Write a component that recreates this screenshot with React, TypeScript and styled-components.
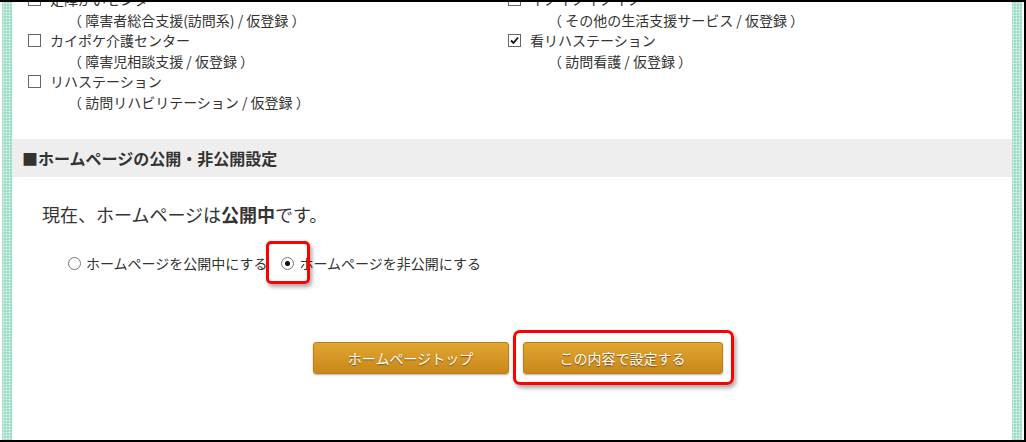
import React from "react";
import styled, { createGlobalStyle } from "styled-components";

const GlobalStyle = createGlobalStyle`
  html, body {
    margin: 0;
    padding: 0;
    background: #fff;
  }
  body {
    font-family: "Noto Sans CJK JP", "Noto Sans", sans-serif;
    color: #333;
  }
`;

const Frame = styled.div`
  position: relative;
  width: 1026px;
  height: 442px;
  box-sizing: border-box;
  border-top: 2px solid #000;
  border-right: 2px solid #000;
  border-bottom: 2px solid #000;
  display: flex;
  overflow: hidden;
  background: #fff;
`;

const Stripe = styled.div<{ $ml?: number; $mr?: number }>`
  flex: 0 0 10px;
  margin-left: ${(p) => p.$ml ?? 0}px;
  margin-right: ${(p) => p.$mr ?? 0}px;
  background-color: #9cdcc6;
  background-image: radial-gradient(
    circle,
    rgba(255, 255, 255, 0.6) 0.8px,
    transparent 1.3px
  );
  background-size: 3px 3px;
`;

const Content = styled.main`
  flex: 1;
  display: flex;
  flex-direction: column;
  min-width: 0;
`;

const OfficeList = styled.ul`
  list-style: none;
  margin: -13px 0 0;
  padding: 0 0 0 16px;
  display: grid;
  grid-template-columns: 480px 1fr;
  grid-auto-flow: column;
  grid-template-rows: repeat(3, auto);
  row-gap: 0;
`;

const Office = styled.li`
  font-size: 14px;
  line-height: 20.5px;
  color: #333;
`;

const NameLine = styled.div`
  display: flex;
  align-items: center;
`;

const Box = styled.span`
  flex: 0 0 auto;
  width: 11px;
  height: 11px;
  border: 1px solid #666;
  margin-right: 9px;
  display: inline-flex;
  align-items: center;
  justify-content: center;
  background: #fff;
`;

const SubLine = styled.div`
  padding-left: 40px;
  color: #333;
`;

const SectionHead = styled.h2`
  margin: 27px 0 0;
  height: 38px;
  display: flex;
  align-items: center;
  padding-left: 10px;
  background: #eeeeee;
  font-size: 16px;
  font-weight: 700;
  color: #333;
`;

const Status = styled.p`
  margin: 24px 0 0;
  padding-left: 30px;
  font-size: 18px;
  line-height: 27px;
  color: #333;
  b {
    font-weight: 700;
  }
`;

const RadioRow = styled.div`
  margin-top: 25px;
  padding-left: 56px;
  display: flex;
  align-items: center;
  font-size: 14px;
  line-height: 20px;
  color: #333;
`;

const RadioLabel = styled.label<{ $gapRight?: number }>`
  display: inline-flex;
  align-items: center;
  margin-right: ${(p) => p.$gapRight ?? 0}px;
`;

const RadioCircle = styled.span<{ $on?: boolean }>`
  position: relative;
  width: 11px;
  height: 11px;
  border: 1px solid #777;
  border-radius: 50%;
  margin-right: 5px;
  background: #fff;
  &::after {
    content: "";
    display: ${(p) => (p.$on ? "block" : "none")};
    position: absolute;
    left: 3px;
    top: 3px;
    width: 5px;
    height: 5px;
    border-radius: 50%;
    background: #111;
  }
`;

const Highlight = styled.span<{ $t: number; $r: number; $b: number; $l: number; $rad: number }>`
  position: relative;
  display: inline-flex;
  &::before {
    content: "";
    position: absolute;
    top: ${(p) => -p.$t}px;
    right: ${(p) => -p.$r}px;
    bottom: ${(p) => -p.$b}px;
    left: ${(p) => -p.$l}px;
    border: 3px solid #ff0000;
    border-radius: ${(p) => p.$rad}px;
    box-shadow: 2px 3px 4px rgba(0, 0, 0, 0.35);
    pointer-events: none;
  }
`;

const ButtonRow = styled.div`
  margin-top: 69px;
  display: flex;
  justify-content: center;
  gap: 14px;
  padding-left: 11px;
`;

const Button = styled.button<{ $w: number }>`
  width: ${(p) => p.$w}px;
  height: 32px;
  border: 1px solid #bb7f18;
  border-radius: 3px;
  background: linear-gradient(#e2a52f, #c8881b);
  box-shadow: 0 1px 2px rgba(0, 0, 0, 0.3);
  color: #fff;
  font-family: "Noto Sans CJK JP", "Noto Sans", sans-serif;
  font-size: 14px;
  text-shadow: 0 1px 1px rgba(0, 0, 0, 0.45);
  cursor: pointer;
  padding: 0;
`;

const CheckMark = () => (
  <svg width="11" height="11" viewBox="0 0 11 11">
    <path d="M2 5.5 L4.5 8 L9 2.5" fill="none" stroke="#111" strokeWidth="1.8" />
  </svg>
);

type Item = { name: string; sub: string; checked?: boolean };

const items: Item[] = [
  { name: "足障がいセンター", sub: "（ 障害者総合支援(訪問系) / 仮登録 ）" },
  { name: "カイポケ介護センター", sub: "（ 障害児相談支援 / 仮登録 ）" },
  { name: "リハステーション", sub: "（ 訪問リハビリテーション / 仮登録 ）" },
  { name: "イノイノイノイノ", sub: "（ その他の生活支援サービス / 仮登録 ）" },
  { name: "看リハステーション", sub: "（ 訪問看護 / 仮登録 ）", checked: true },
];

export default function App() {
  return (
    <>
      <GlobalStyle />
      <Frame>
        <Stripe $ml={2} />
        <Content>
          <OfficeList>
            {items.map((it) => (
              <Office key={it.name}>
                <NameLine>
                  <Box>{it.checked && <CheckMark />}</Box>
                  {it.name}
                </NameLine>
                <SubLine>{it.sub}</SubLine>
              </Office>
            ))}
          </OfficeList>

          <SectionHead>■ホームページの公開・非公開設定</SectionHead>

          <Status>
            現在、ホームページは<b>公開中</b>です。
          </Status>

          <RadioRow>
            <RadioLabel $gapRight={14}>
              <RadioCircle />
              ホームページを公開中にする
            </RadioLabel>
            <RadioLabel>
              <Highlight $t={16} $r={11} $b={14} $l={15} $rad={5}>
                <RadioCircle $on />
              </Highlight>
              ホームページを非公開にする
            </RadioLabel>
          </RadioRow>

          <ButtonRow>
            <Button $w={196}>ホームページトップ</Button>
            <Highlight $t={12} $r={11} $b={11} $l={10} $rad={7}>
              <Button $w={200}>この内容で設定する</Button>
            </Highlight>
          </ButtonRow>
        </Content>
        <Stripe $mr={2} />
      </Frame>
    </>
  );
}
